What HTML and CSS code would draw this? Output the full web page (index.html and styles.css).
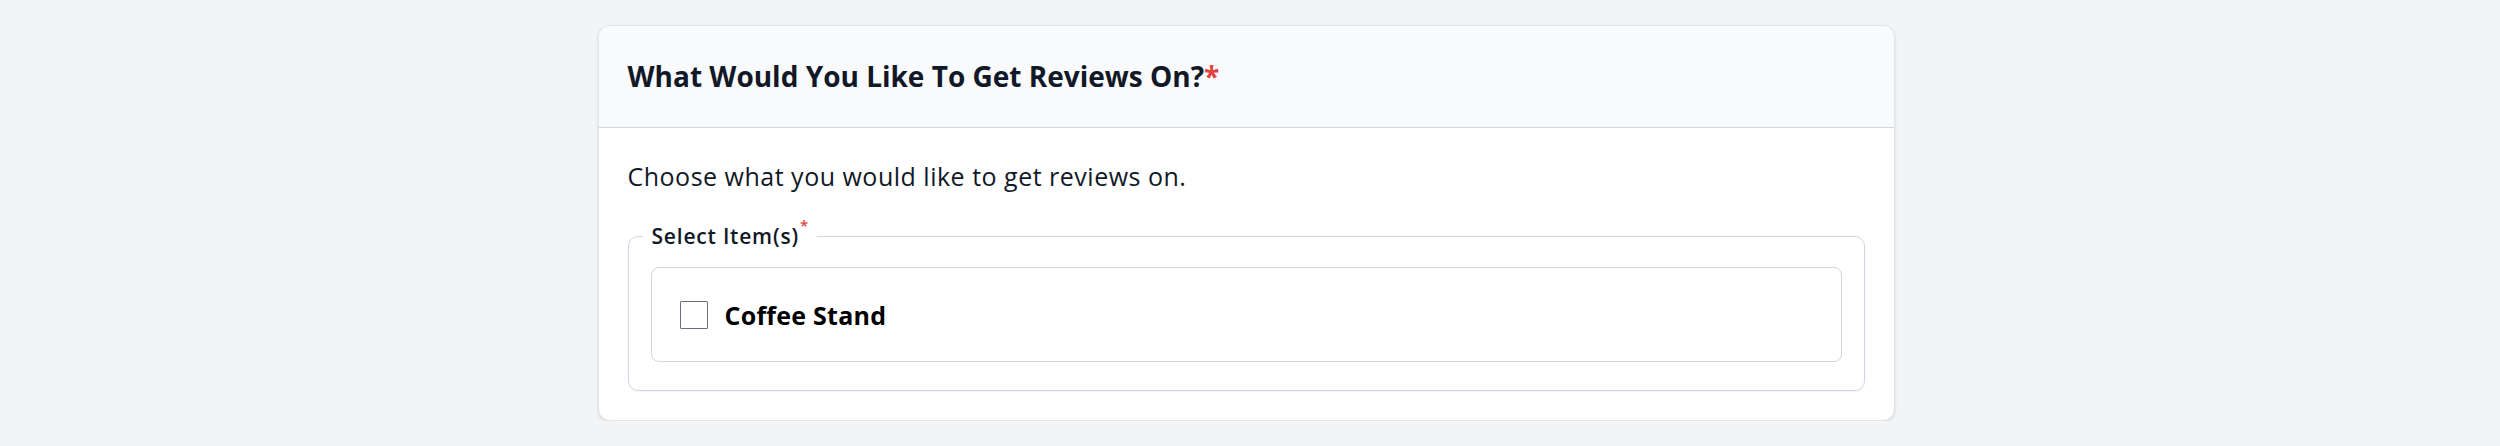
FILE: index.html
```html
<!DOCTYPE html>
<html lang="en">
<head>
<meta charset="utf-8">
<title>Reviews</title>
<link rel="stylesheet" href="styles.css">
</head>
<body>
<main class="page">
  <section class="card">
    <header class="card-header">
      <h2 class="card-title">What Would You Like To Get Reviews On?<span class="req">*</span></h2>
    </header>
    <div class="card-body">
      <p class="intro">Choose what you would like to get reviews on.</p>
      <fieldset class="items">
        <legend class="items-legend">Select Item(s)<sup class="req small">*</sup></legend>
        <label class="item">
          <input type="checkbox" class="check">
          <span class="item-name">Coffee Stand</span>
        </label>
      </fieldset>
    </div>
  </section>
</main>
</body>
</html>
```

FILE: styles.css
```css
html, body {
  margin: 0;
  padding: 0;
  background: #f3f4f6;
}
body {
  font-family: "Open Sans", "Noto Sans", sans-serif;
  color: #111827;
}
.page {
  display: flex;
  justify-content: center;
  padding: 25px 8px 0 0;
}
.card {
  width: 1297px;
  box-sizing: border-box;
  background: #ffffff;
  border: 1px solid #e2e4e8;
  border-radius: 12px;
  box-shadow: 0 1px 3px rgba(0, 0, 0, 0.12);
  overflow: hidden;
}
.card-header {
  background: #f9fafb;
  border-bottom: 1px solid #d4d6da;
  padding: 29px 29px 30px;
}
.card-title {
  margin: 0;
  font-size: 28px;
  line-height: 42px;
  font-weight: 700;
  color: #111827;
}
.req {
  color: #e0443c;
}
.small {
  font-size: 15px;
  vertical-align: top;
  line-height: 1;
  position: relative;
  top: -3px;
  margin-left: 1px;
}
.card-body {
  padding: 30px 29px 29px;
}
.intro {
  margin: 0 0 26px;
  font-size: 25px;
  line-height: 37px;
  letter-spacing: 0.5px;
  color: #111827;
}
.items {
  margin: 0;
  border: 1px solid #cfd5e2;
  border-radius: 10px;
  padding: 0 22px 28px;
  box-shadow: 0 1px 2px rgba(0, 0, 0, 0.04);
}
.items-legend {
  margin-left: -8px;
  padding: 0 8px 0 9px;
  font-size: 21px;
  line-height: 30px;
  letter-spacing: 0.8px;
  font-weight: 600;
  color: #111827;
}
.item {
  margin-top: 16px;
  display: flex;
  align-items: center;
  gap: 17px;
  height: 93px;
  padding: 0 28px;
  border: 1px solid #d3d4dc;
  border-radius: 8px;
  cursor: pointer;
}
.check {
  appearance: none;
  -webkit-appearance: none;
  margin: 0;
  width: 28px;
  height: 28px;
  box-sizing: border-box;
  border: 1.5px solid #6b7080;
  border-radius: 1px;
  background: #ffffff;
  flex: none;
}
.item-name {
  font-size: 25px;
  font-weight: 700;
  letter-spacing: 0.25px;
  color: #000000;
}
```
